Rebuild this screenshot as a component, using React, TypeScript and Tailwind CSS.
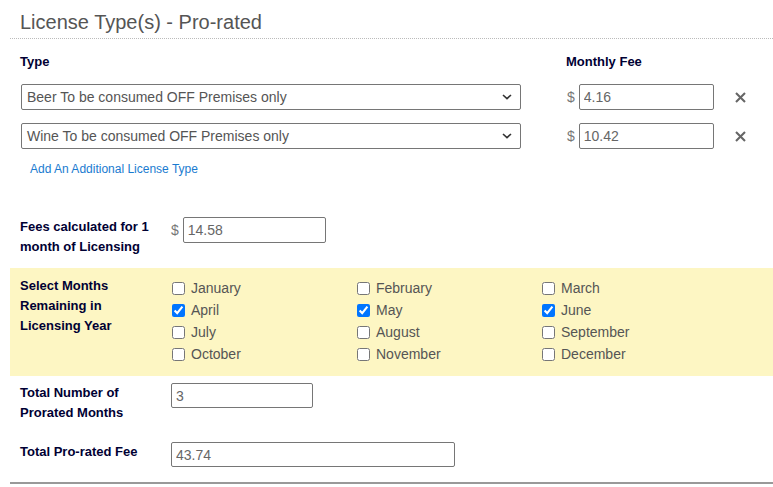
import { useState } from "react";

const MONTHS = [
  "January", "February", "March",
  "April", "May", "June",
  "July", "August", "September",
  "October", "November", "December",
];

const LICENSES = [
  { name: "Beer To be consumed OFF Premises only", fee: "4.16" },
  { name: "Wine To be consumed OFF Premises only", fee: "10.42" },
];

function Chevron() {
  return (
    <svg width="10" height="6" viewBox="0 0 10 6" className="mr-[8px]">
      <path d="M1 1l4 3.6L9 1" fill="none" stroke="#333" strokeWidth="1.6" />
    </svg>
  );
}

function RemoveIcon() {
  return (
    <svg width="11" height="11" viewBox="0 0 11 11">
      <path d="M1 1l9 9M10 1L1 10" stroke="#666" strokeWidth="2.1" />
    </svg>
  );
}

function TextBox({ value, className }: { value: string; className: string }) {
  return (
    <input
      readOnly
      value={value}
      className={`rounded-[2px] border border-[#767676] bg-white px-[4px] text-[14px] text-[#666] outline-none ${className}`}
    />
  );
}

export default function App() {
  const [checked, setChecked] = useState<string[]>(["April", "May", "June"]);

  const toggle = (m: string) =>
    setChecked((c) => (c.includes(m) ? c.filter((x) => x !== m) : [...c, m]));

  return (
    <div className="w-[773px] pl-[10px] font-[family-name:'Liberation_Sans',Arial,sans-serif]">
      {/* Heading */}
      <div className="border-b border-dotted border-[#bbb] pb-[4px] pl-[10px] pt-[10px] text-[20px] leading-[24px] text-[#555]">
        License Type(s) - Pro-rated
      </div>

      {/* License rows */}
      <div className="pl-[10px]">
        <div className="mt-[15px] flex text-[13px] font-bold leading-[16px] text-[#000033]">
          <div className="w-[546px]">Type</div>
          <div>Monthly Fee</div>
        </div>

        <div className="mt-[14px] flex flex-col gap-[13px]">
          {LICENSES.map((l) => (
            <div key={l.name} className="flex items-center">
              <div className="ml-[1px] flex h-[26px] w-[500px] items-center justify-between rounded-[2px] border border-[#767676] bg-white pl-[5px] text-[14px] text-[#555]">
                <span>{l.name}</span>
                <Chevron />
              </div>
              <span className="ml-[46px] mr-[4px] text-[14px] text-[#777]">$</span>
              <TextBox value={l.fee} className="h-[26px] w-[135px]" />
              <span className="ml-[21px] flex items-center">
                <RemoveIcon />
              </span>
            </div>
          ))}
        </div>

        <div className="ml-[10px] mt-[12px] text-[12px] leading-[16px] text-[#1a7bd0]">
          Add An Additional License Type
        </div>

        {/* Monthly total */}
        <div className="mt-[40px] flex items-start">
          <div className="w-[151px] text-[13px] font-bold leading-[20px] text-[#000033]">
            Fees calculated for 1 month of Licensing
          </div>
          <span className="mr-[4px] text-[14px] leading-[26px] text-[#777]">$</span>
          <TextBox value="14.58" className="h-[26px] w-[143px]" />
        </div>
      </div>

      {/* Month selection */}
      <div className="mt-[11px] flex bg-[#fdf6c3] pb-[11px] pl-[10px] pt-[8px]">
        <div className="w-[152px] text-[13px] font-bold leading-[20px] text-[#000033]">
          Select Months<br />Remaining in<br />Licensing Year
        </div>
        <div className="mt-[1px] grid grid-cols-[185px_185px_185px]">
          {MONTHS.map((m) => (
            <label key={m} className="flex h-[22px] items-center gap-[6px] text-[14px] text-[#555]">
              <input
                type="checkbox"
                checked={checked.includes(m)}
                onChange={() => toggle(m)}
                className="m-0 h-[13px] w-[13px] accent-[#0075ff]"
              />
              {m}
            </label>
          ))}
        </div>
      </div>

      {/* Totals */}
      <div className="pl-[10px]">
        <div className="mt-[7px] flex items-start">
          <div className="w-[151px] text-[13px] font-bold leading-[20px] text-[#000033]">
            Total Number of<br />Prorated Months
          </div>
          <TextBox value={String(checked.length)} className="h-[25px] w-[142px]" />
        </div>

        <div className="mt-[19px] flex items-start">
          <div className="w-[151px] text-[13px] font-bold leading-[20px] text-[#000033]">
            Total Pro-rated Fee
          </div>
          <TextBox value="43.74" className="h-[25px] w-[284px]" />
        </div>
      </div>

      <div className="mt-[15px] border-b-2 border-[#999]" />
    </div>
  );
}
